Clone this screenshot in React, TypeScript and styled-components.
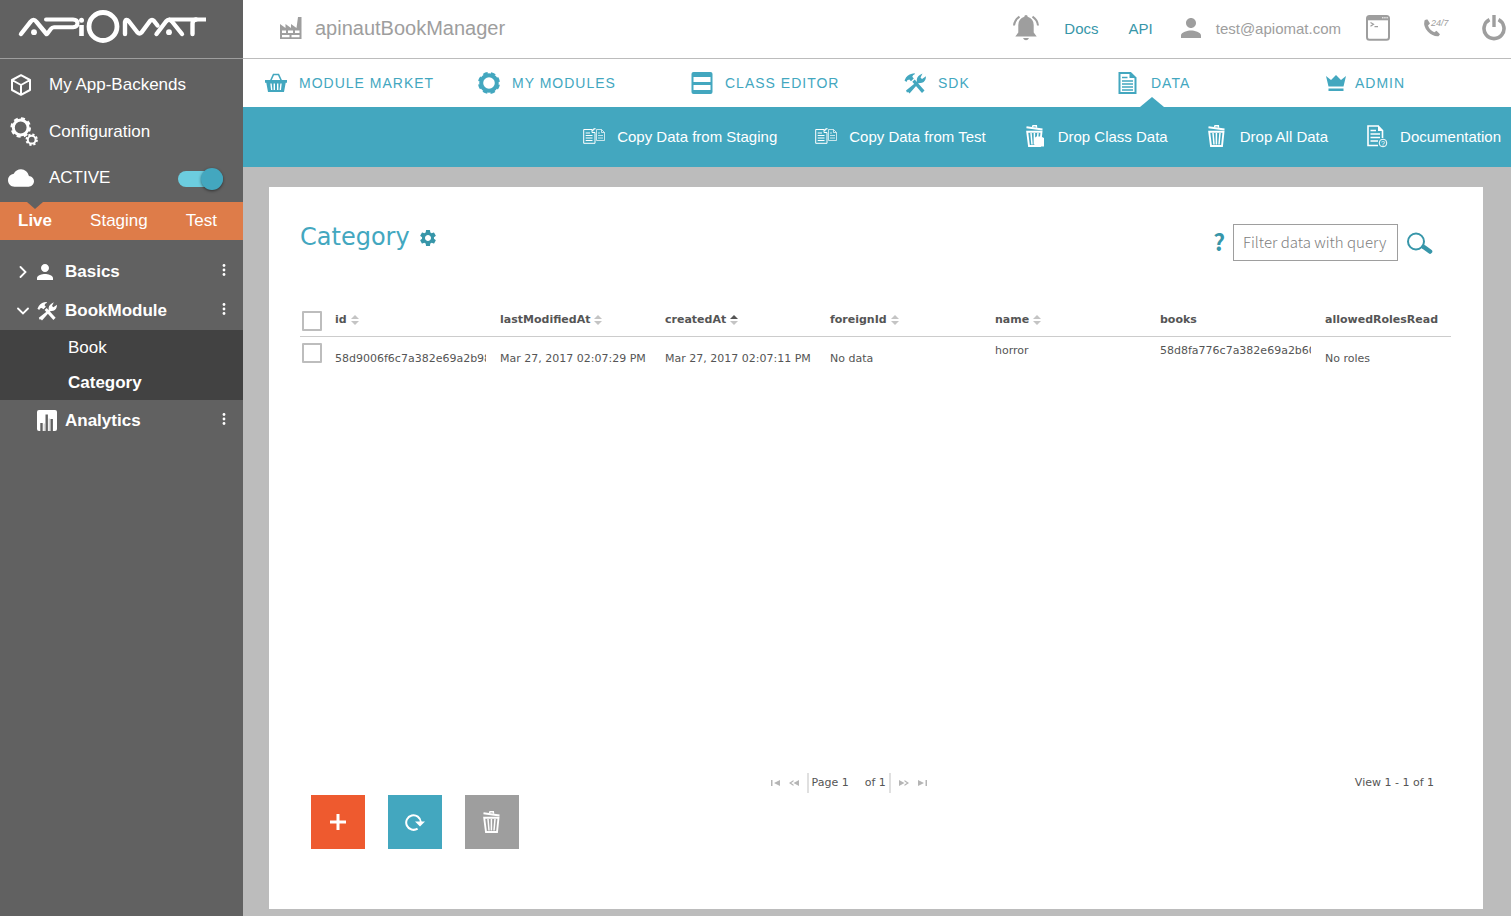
import React from "react";
import styled, { createGlobalStyle, css } from "styled-components";
import { MdCloud, MdPerson, MdSettings } from "react-icons/md";

const color = {
  teal: "#43a7bf",
  tealDark: "#3796a9",
  side: "#616161",
  sideDark: "#424242",
  orange: "#de7c49",
  red: "#ee5a2f",
  grey: "#9e9e9e",
  canvas: "#bcbcbc",
  text: "#555555",
};

const sans = `"Liberation Sans", Arial, sans-serif`;
const verdana = `"DejaVu Sans", Verdana, sans-serif`;
const source = `"Noto Sans CJK SC", "Noto Sans", sans-serif`;

const GlobalStyle = createGlobalStyle`
  *, *::before, *::after { box-sizing: border-box; }
  body { margin: 0; font-family: ${sans}; background: ${color.canvas}; }
  button { border: 0; padding: 0; background: none; font: inherit; color: inherit; cursor: pointer; }
  a { color: inherit; text-decoration: none; }
  ul { list-style: none; margin: 0; padding: 0; }
  svg { display: block; flex: none; }
`;

/* ---------- icons ---------- */

const Logo = () => (
  <svg width="190" height="34" viewBox="17 9 190 34" fill="none" stroke="#fff" strokeWidth="4.400" strokeLinecap="round" strokeLinejoin="round" role="img" aria-label="Apiomat">
    <path d="M21 34 30.500 21.800Q33.500 18 36.500 21.800L46.500 34" />
    <path d="M46 19.500H73Q77.500 19.700 77.500 23.300T73 27.300H54Q52 27.300 50.800 29L47.500 33.500" strokeWidth="4" />
    <path d="M81.500 25V36" strokeLinecap="butt" strokeWidth="4.600" />
    <circle cx="81.500" cy="20.200" r="2.500" fill="#fff" stroke="none" />
    <circle cx="103" cy="26.500" r="14" strokeWidth="4.800" />
    <path d="M125 34V22Q126 18 129 21.500L137.500 32.500Q139.500 34.500 141.500 32.500L150 21Q152 18.800 154 21L157.500 25.500" />
    <path d="M156.500 34 166 21.500Q169 18 172 21.500L182 34" />
    <path d="M169 19.500H206" strokeWidth="4" strokeLinecap="butt" />
    <path d="M192.500 34V23.500Q192.500 20 196 19.500" />
    <circle cx="34" cy="32.200" r="2.900" fill="#fff" stroke="none" />
    <circle cx="169" cy="32.200" r="2.900" fill="#fff" stroke="none" />
  </svg>
);

const CubeIcon = () => (
  <svg width="22" height="22" viewBox="0 0 22 22" fill="none" stroke="currentColor" strokeWidth="2" strokeLinejoin="round">
    <path d="M11 1.200 20 6V16L11 20.800 2 16V6ZM2 6l9 5 9-5M11 11v9.800" />
  </svg>
);

const GearsIcon = () => (
  <svg width="28" height="29" viewBox="0 0 28 29" fill="none" stroke="currentColor">
    <circle cx="10.700" cy="10.500" r="7.400" strokeWidth="3" />
    <circle cx="10.700" cy="10.500" r="9.200" strokeWidth="2.200" strokeDasharray="4 3.225" />
    <circle cx="21.700" cy="22.700" r="3.900" strokeWidth="2" />
    <circle cx="21.700" cy="22.700" r="5.200" strokeWidth="2" strokeDasharray="2.200 1.884" />
  </svg>
);

const GearRingIcon = () => (
  <svg width="22" height="22" viewBox="0 0 22 22" fill="none" stroke="currentColor">
    <circle cx="11" cy="11" r="7.800" strokeWidth="4" />
    <circle cx="11" cy="11" r="10" strokeWidth="2" strokeDasharray="4.600 3.254" strokeDashoffset="-1.600" />
  </svg>
);

const ToolsIcon = ({ size = 22 }: { size?: number }) => (
  <svg width={size} height={size} viewBox="0 0 22 22" fill="currentColor">
    <path d="M.5 8.500 2 5.500Q5 1.500 10.500 1.200L11 2Q8.500 3 8.300 4.800L9.800 6.400 7 9.200 5.300 7.600 3.300 8.200 2.500 10Z" />
    <path d="M8.300 9.800 10.700 7.600 20.500 18.500 18 21Z" />
    <path d="M2 18.500 12.800 9.800Q12.300 5 16.200 2.800L18.500 1.500 16.500 5.500 18 7 22 4.200Q21.800 9.500 18 10.700L14.500 11.200 5.500 21.500 4.200 20 3 20.500Z" />
  </svg>
);

const ChartIcon = () => (
  <svg width="20" height="21" viewBox="0 0 20 21">
    <rect width="20" height="21" rx="2" fill="#fff" />
    <path d="M4.500 21V13M9.700 21V4.500M14.700 21V9" stroke="#616161" strokeWidth="2.400" />
    <path d="M7.200 21V13.500M12.200 21V8.500" stroke="#c8c8c8" strokeWidth="1" />
  </svg>
);

const ChevronIcon = ({ open }: { open?: boolean }) => (
  <svg width="12" height="12" viewBox="0 0 12 12" fill="none" stroke="#fff" strokeWidth="1.800" strokeLinecap="round">
    <path d={open ? "M1 3.500 6 8.500 11 3.500" : "M3.500 1 8.500 6 3.500 11"} />
  </svg>
);

const DotsIcon = () => (
  <svg width="4" height="12" viewBox="0 0 4 12" fill="#fff">
    <circle cx="2" cy="1.500" r="1.400" />
    <circle cx="2" cy="6" r="1.400" />
    <circle cx="2" cy="10.500" r="1.400" />
  </svg>
);

const FactoryIcon = () => (
  <svg width="22" height="22" viewBox="0 0 22 22" fill="currentColor" fillRule="evenodd">
    <path d="M0 7 5.500 11V7L11 11V7L16.500 11 18 0H21.500V22H0ZM2 13.500V16H6V13.500ZM8 13.500V16H13V13.500ZM15 13.500V16H19.500V13.500ZM2 18V20.300H9.500V18ZM11.500 18V20.300H19.500V18Z" />
  </svg>
);

const BellIcon = () => (
  <svg width="26" height="26" viewBox="0 0 26 26" fill="currentColor">
    <path d="M11.300 1.800Q11.300 0 13 0T14.700 1.800Q20.500 3.500 20.700 10V17.500L23.700 21.500H2.300L5.300 17.500V10Q5.500 3.500 11.300 1.800Z" />
    <path d="M10 23H16Q15 25.300 13 25.300T10 23Z" />
    <path d="M1 10.500Q1.500 5 6.500 1.700M25 10.500Q24.500 5 19.500 1.700" fill="none" stroke="currentColor" strokeWidth="2" />
  </svg>
);

const ConsoleIcon = () => (
  <svg width="24" height="26" viewBox="0 0 24 26" fill="none" stroke="currentColor">
    <rect x="1" y="1" width="22" height="23.800" rx="2.500" strokeWidth="2" />
    <path d="M1 3.300H23" strokeWidth="4" />
    <path d="M16 2.800H22" stroke="#fff" strokeDasharray="1.500 .7" />
    <path d="M4.500 7.500 7.500 9.300 4.500 11.200M8.500 11.700H12" strokeWidth="1.200" />
  </svg>
);

const PhoneIcon = () => (
  <svg width="26" height="22" viewBox="0 0 26 22" fill="currentColor">
    <path d="M1.500 3.500Q3 2 4.500 2.500L7 6.500 5 8.500Q6.500 13 11.300 15.300L13.500 13.800 17 17.200 15.500 19.200Q10 19.800 5 14.800T1.500 3.500Z" />
    <text x="8" y="9" fontSize="9" fontStyle="italic" fontFamily="Liberation Sans">24/7</text>
  </svg>
);

const PowerIcon = () => (
  <svg width="24" height="26" viewBox="0 0 24 26" fill="none" stroke="currentColor">
    <path d="M7.500 4.700A10 10 0 1 0 16.500 4.700" strokeWidth="3.600" />
    <path d="M12 0V12" strokeWidth="3.400" />
  </svg>
);

const BasketIcon = () => (
  <svg width="22" height="20" viewBox="0 0 22 20">
    <path d="M5.500 8 8.500 1.500H13.500L16.500 8" fill="none" stroke="currentColor" strokeWidth="1.600" />
    <path d="M0 7H22V9.800H20.700L19 19H3L1.300 9.800H0Z" fill="currentColor" />
    <path d="M6 10.500 6.700 17M9.300 10.500V17M12.700 10.500V17M16 10.500 15.300 17" stroke="#fff" strokeWidth="1.400" />
  </svg>
);

const ClassIcon = () => (
  <svg width="22" height="22" viewBox="0 0 22 22">
    <rect x=".5" width="21" height="22" rx="2" fill="currentColor" />
    <path d="M2.500 5H19.500V10H2.500ZM2.500 13H19.500V18H2.500Z" fill="#fff" />
  </svg>
);

const DocumentIcon = () => (
  <svg width="22" height="22" viewBox="0 0 22 22" fill="none" stroke="currentColor">
    <path d="M2.500 1H13.500L18.500 6V21H2.500Z" strokeWidth="2" />
    <path d="M12.500 0V6H19.500Z" fill="currentColor" stroke="none" />
    <path d="M5 5.500H10.500M5 9H16M5 12H16M5 15H16M5 18H16" strokeWidth="1.400" />
  </svg>
);

const CrownIcon = () => (
  <svg width="20" height="18" viewBox="0 0 20 18" fill="currentColor">
    <path d="M0 2 5 6 10 1 15 6 20 2 17.500 12.500H2.500ZM2.500 14.500H17.500V17H2.500Z" />
  </svg>
);

const CopyIcon = () => (
  <svg width="22" height="16" viewBox="0 0 22 16" fill="none" stroke="#fff">
    <path d="M9 1.500H.7V15.300H12V4.500M9 1.500V4.500H12" />
    <path d="M2.700 5H7M2.700 7.500H9.500M2.700 10H9.500M2.700 12.500H9.500" />
    <path d="M9.500 3Q10 .7 12.500 .7" strokeWidth="1.200" />
    <path d="M13.500 1.500H18.500L21.500 4.500V12.500H13.500ZM18.500 1.500V4.500H21.500M15 5H17M15 7.500H20M15 10H20" opacity=".7" />
  </svg>
);

const TrashIcon = ({ filled }: { filled?: boolean }) => (
  <svg width="22" height="22" viewBox="0 0 22 22" fill="none" stroke="#fff">
    <path d="M2.500 2.300 18.500 4.500" strokeWidth="2" />
    <path d="M8.500 2 9 .8H12.300L12.500 2.800" strokeWidth="1.500" />
    <path d="M3.200 6.800H17.500L16 21H5Z" strokeWidth="1.900" />
    <path d="M7 8 8 19.500M10.400 8V19.500M14 8 13 19.500" strokeWidth="1.500" />
    {filled && <path d="M10.500 13 12.500 11.500H17L20 13V21.500H10.500Z" fill="#fff" stroke="none" />}
  </svg>
);

const HelpDocIcon = () => (
  <svg width="22" height="23" viewBox="0 0 22 23" fill="none" stroke="#fff">
    <path d="M12 20.500H2V1H12L16.500 5.500V13" strokeWidth="1.600" />
    <path d="M12 0V6H17Z" fill="#fff" stroke="none" />
    <path d="M4.500 5.500H10M4.500 9H14M4.500 12.500H14M4.500 16H12" strokeWidth="1.300" />
    <circle cx="17" cy="18" r="3.800" />
    <text x="17" y="20.500" fontSize="7" textAnchor="middle" fill="#fff" stroke="none" fontFamily="Liberation Sans">?</text>
  </svg>
);

const SearchIcon = () => (
  <svg width="26" height="22" viewBox="0 0 26 22" fill="none" stroke="currentColor">
    <circle cx="9" cy="9.500" r="8" strokeWidth="2" />
    <path d="M14.500 14 17 16" strokeWidth="3" />
    <path d="M17.500 15.500 23 19.500" strokeWidth="4.600" strokeLinecap="round" />
  </svg>
);

const ReloadIcon = () => (
  <svg width="20" height="18" viewBox="0 0 20 18">
    <path d="M12.600 15.600A7.300 7.300 0 1 1 15.800 9" fill="none" stroke="#fff" strokeWidth="2" />
    <path d="M10 8.500H20L15 13.500Z" fill="#fff" />
  </svg>
);

const PlusIcon = () => (
  <svg width="18" height="18" viewBox="0 0 18 18" stroke="#fff" strokeWidth="3">
    <path d="M9 1V17M1 9H17" />
  </svg>
);

const SortIcon = ({ active }: { active?: boolean }) => (
  <svg width="8" height="10" viewBox="0 0 8 10">
    <path d="M0 4 4 0 8 4Z" fill={active ? "#555" : "#c4c4c4"} />
    <path d="M0 6 4 10 8 6Z" fill="#c4c4c4" />
  </svg>
);

const PagerIcon = ({ kind }: { kind: "first" | "prev" | "next" | "last" }) => {
  const flip = kind === "next" || kind === "last";
  const edge = kind === "first" || kind === "last";
  return (
    <svg width="10" height="6" viewBox="0 0 10 6" fill="#b5b5b5" transform={flip ? "rotate(180)" : undefined}>
      {edge ? <path d="M0 0H1.500V6H0ZM3 3 9 0V6Z" /> : <path d="M4.500 3 10 0V6ZM0 3 4.500 0V1.500L2.200 3 4.500 4.500V6Z" />}
    </svg>
  );
};

/* ---------- shell ---------- */

const Shell = styled.div`
  display: flex;
  min-height: 100vh;
`;

const Sidebar = styled.aside`
  flex: 0 0 243px;
  background: ${color.side};
  color: #fff;
  font-size: 17px;
`;

const Brand = styled.a`
  display: flex;
  align-items: center;
  height: 59px;
  padding: 0 17px 6px;
  border-bottom: 1px solid ${color.grey};
`;

const SideMenu = styled.div`
  padding-top: 2px;
`;

const sideRow = css`
  display: flex;
  align-items: center;
  height: 47px;
`;

const SideLink = styled.a`
  ${sideRow}
`;

const StatusRow = styled.label`
  ${sideRow}
  padding: 0 20px 2px 0;
`;

const SideIcon = styled.span<{ $inset: number }>`
  width: 49px;
  padding-left: ${(p) => p.$inset}px;
`;

const Toggle = styled.input`
  appearance: none;
  display: flex;
  align-items: center;
  justify-content: flex-end;
  width: 45px;
  height: 16px;
  margin: 2px 0 0 auto;
  border-radius: 8px;
  background: #6ccddf;
  &::before {
    content: "";
    width: 22px;
    height: 22px;
    border-radius: 50%;
    background: ${color.teal};
    box-shadow: 0 1px 3px rgba(0, 0, 0, 0.5);
  }
`;

const StageBar = styled.div`
  position: relative;
  display: flex;
  justify-content: space-between;
  align-items: center;
  height: 38px;
  padding: 0 26px 0 18px;
  background: ${color.orange};
  &::before {
    content: "";
    position: absolute;
    top: 0;
    left: 27px;
    border: 8px solid transparent;
    border-bottom: 0;
    border-top: 7px solid ${color.side};
  }
`;

const Stage = styled.button<{ $active?: boolean }>`
  font-weight: ${(p) => (p.$active ? 700 : 400)};
`;

const Tree = styled.ul`
  padding-top: 12px;
`;

const TreeRow = styled.div`
  display: flex;
  align-items: center;
  height: 39px;
  padding: 0 17px;
  font-weight: 700;
`;

const TreeName = styled.button`
  display: flex;
  align-items: center;
  flex: 1;
  font-weight: 700;
`;

const TreeChevron = styled.span`
  width: 18px;
`;

const TreeIcon = styled.span`
  display: flex;
  width: 30px;
  padding-left: 2px;
`;

const MenuButton = styled.button`
  padding-bottom: 4px;
`;

const SubTree = styled.ul`
  margin-bottom: 1px;
  background: ${color.sideDark};
`;

const SubLink = styled.a<{ $active?: boolean }>`
  display: block;
  padding-left: 68px;
  line-height: 35px;
  font-weight: ${(p) => (p.$active ? 700 : 400)};
`;

const Main = styled.main`
  flex: 1;
  min-width: 0;
  display: flex;
  flex-direction: column;
`;

const Header = styled.header`
  display: flex;
  align-items: center;
  height: 59px;
  padding: 0 5px 2px 37px;
  border-bottom: 1px solid ${color.canvas};
  background: #fff;
  color: ${color.grey};
  font-size: 15px;
`;

const AppName = styled.div`
  display: flex;
  align-items: center;
  gap: 13px;
  margin-right: auto;
  font-size: 20px;
`;

const HeaderLinks = styled.div`
  display: flex;
  gap: 30px;
  margin: 0 23px 0 25px;
  color: ${color.tealDark};
`;

const UserLink = styled.a`
  display: flex;
  align-items: center;
  gap: 10px;
`;

const HeaderTools = styled.div`
  display: flex;
  align-items: center;
  gap: 33px;
  margin-left: 25px;
`;

const Tabs = styled.nav`
  display: grid;
  grid-template-columns: 213fr 213fr 213fr 213fr 209fr 185fr;
  height: 48px;
  padding-left: 22px;
  background: #fff;
  color: ${color.teal};
  font-size: 14px;
  letter-spacing: 1px;
`;

const Tab = styled.a<{ $active?: boolean; $gap?: number }>`
  position: relative;
  display: flex;
  align-items: center;
  gap: ${(p) => p.$gap ?? 12}px;
  white-space: nowrap;
  ${(p) =>
    p.$active &&
    css`
      &::after {
        content: "";
        position: absolute;
        left: 23px;
        bottom: 0;
        border: 12px solid transparent;
        border-top: 0;
        border-bottom: 10px solid ${color.teal};
      }
    `}
`;

const ActionBar = styled.div`
  display: flex;
  justify-content: flex-end;
  gap: 38px;
  height: 60px;
  padding: 0 10px 2px 0;
  background: ${color.teal};
  color: #fff;
  font-size: 15px;
`;

const Action = styled.button`
  display: flex;
  align-items: center;
  gap: 12px;
  white-space: nowrap;
`;

const Canvas = styled.div`
  flex: 1;
  display: flex;
  padding: 20px 28px 7px 26px;
  background: ${color.canvas};
`;

const Card = styled.section`
  flex: 1;
  min-width: 0;
  display: flex;
  flex-direction: column;
  padding: 37px 32px 60px 31px;
  background: #fff;
  color: ${color.text};
  font-family: ${verdana};
  font-size: 11px;
`;

const CardHead = styled.div`
  display: flex;
  align-items: center;
  height: 37px;
  padding-right: 18px;
  color: ${color.tealDark};
`;

const Title = styled.h1`
  margin: 0 8px 10px 0;
  color: ${color.teal};
  font-size: 24px;
  font-weight: 400;
  line-height: 25px;
`;

const TitleButton = styled.button`
  margin: 0 auto 10px 0;
`;

const HelpButton = styled.button`
  margin: 0 8px 4px 0;
  font-family: ${source};
  font-size: 23px;
  font-weight: 700;
  line-height: 24px;
`;

const FilterInput = styled.input`
  width: 165px;
  height: 37px;
  margin-right: 9px;
  padding: 0 9px 3px;
  border: 1px solid ${color.grey};
  font-family: ${source};
  font-size: 15px;
  font-weight: 300;
  &::placeholder {
    color: #808080;
    opacity: 1;
  }
`;

const TableArea = styled.div`
  flex: 1;
  padding-top: 44px;
`;

const Table = styled.table`
  width: 100%;
  table-layout: fixed;
  border-spacing: 0;
  line-height: 18px;
`;

const Col = styled.col<{ $w?: number }>`
  width: ${(p) => (p.$w ? `${p.$w}px` : "auto")};
`;

const HeadCell = styled.th`
  height: 32px;
  padding: 5px 0 0;
  border-bottom: 1px solid #cccccc;
  vertical-align: top;
  text-align: left;
  white-space: nowrap;
  line-height: 20px;
`;

const SortLabel = styled.span`
  display: flex;
  align-items: center;
  gap: 4px;
`;

const Cell = styled.td<{ $top?: boolean }>`
  padding: ${(p) => (p.$top ? 5 : 13)}px 14px 0 0;
  vertical-align: top;
`;

const Clip = styled.div`
  overflow: hidden;
  white-space: nowrap;
`;

const Check = styled.input`
  appearance: none;
  display: block;
  width: 20px;
  height: 20px;
  margin: 1px 0 0 2px;
  border: 2px solid #bdbdbd;
  border-radius: 1px;
  background: #fff;
  &:checked {
    background: ${color.teal};
  }
`;

const PagerRow = styled.div`
  display: flex;
  align-items: center;
  height: 20px;
  margin-bottom: 2px;
  padding-right: 17px;
  line-height: 20px;
`;

const Pager = styled.div`
  display: flex;
  align-items: center;
  gap: 8px;
  margin: 0 auto 0 41.5%;
`;

const PageInfo = styled.span`
  display: flex;
  gap: 16px;
  padding: 0 3px;
  border: solid #e0e0e0;
  border-width: 0 2px;
`;

const Actions = styled.div`
  display: flex;
  gap: 23px;
  padding-left: 11px;
`;

const SquareButton = styled.button<{ $color: string }>`
  display: grid;
  place-items: center;
  width: 54px;
  height: 54px;
  background: ${(p) => p.$color};
`;

const columns = [
  { name: "id", sort: true },
  { name: "lastModifiedAt", sort: true },
  { name: "createdAt", sort: true, active: true },
  { name: "foreignId", sort: true },
  { name: "name", sort: true },
  { name: "books" },
  { name: "allowedRolesRead" },
];

const cells = [
  { value: "58d9006f6c7a382e69a2b98" },
  { value: "Mar 27, 2017 02:07:29 PM" },
  { value: "Mar 27, 2017 02:07:11 PM" },
  { value: "No data" },
  { value: "horror", top: true },
  { value: "58d8fa776c7a382e69a2b60", top: true },
  { value: "No roles" },
];

export default function App() {
  return (
    <>
      <GlobalStyle />
      <Shell>
        <Sidebar>
          <Brand href="#"><Logo /></Brand>
          <SideMenu>
            <SideLink href="#backends"><SideIcon $inset={10}><CubeIcon /></SideIcon>My App-Backends</SideLink>
            <SideLink href="#configuration"><SideIcon $inset={10}><GearsIcon /></SideIcon>Configuration</SideLink>
            <StatusRow>
              <SideIcon $inset={8}><MdCloud size={26} /></SideIcon>
              ACTIVE
              <Toggle type="checkbox" defaultChecked />
            </StatusRow>
          </SideMenu>
          <StageBar>
            <Stage $active>Live</Stage>
            <Stage>Staging</Stage>
            <Stage>Test</Stage>
          </StageBar>
          <Tree>
            <li>
              <TreeRow>
                <TreeName><TreeChevron><ChevronIcon /></TreeChevron><TreeIcon><MdPerson size={16} viewBox="4 4 16 16" /></TreeIcon>Basics</TreeName>
                <MenuButton aria-label="Basics options"><DotsIcon /></MenuButton>
              </TreeRow>
            </li>
            <li>
              <TreeRow>
                <TreeName><TreeChevron><ChevronIcon open /></TreeChevron><TreeIcon><ToolsIcon size={20} /></TreeIcon>BookModule</TreeName>
                <MenuButton aria-label="BookModule options"><DotsIcon /></MenuButton>
              </TreeRow>
              <SubTree>
                <li><SubLink href="#book">Book</SubLink></li>
                <li><SubLink href="#category" $active>Category</SubLink></li>
              </SubTree>
            </li>
            <li>
              <TreeRow>
                <TreeName><TreeChevron /><TreeIcon><ChartIcon /></TreeIcon>Analytics</TreeName>
                <MenuButton aria-label="Analytics options"><DotsIcon /></MenuButton>
              </TreeRow>
            </li>
          </Tree>
        </Sidebar>

        <Main>
          <Header>
            <AppName><FactoryIcon />apinautBookManager</AppName>
            <button aria-label="Notifications"><BellIcon /></button>
            <HeaderLinks>
              <a href="#docs">Docs</a>
              <a href="#api">API</a>
            </HeaderLinks>
            <UserLink href="#account"><MdPerson size={30} />test@apiomat.com</UserLink>
            <HeaderTools>
              <button aria-label="Console"><ConsoleIcon /></button>
              <button aria-label="Support"><PhoneIcon /></button>
              <button aria-label="Log out"><PowerIcon /></button>
            </HeaderTools>
          </Header>

          <Tabs>
            <Tab href="#market"><BasketIcon />MODULE MARKET</Tab>
            <Tab href="#modules"><GearRingIcon />MY MODULES</Tab>
            <Tab href="#classes"><ClassIcon />CLASS EDITOR</Tab>
            <Tab href="#sdk"><ToolsIcon />SDK</Tab>
            <Tab href="#data" $active><DocumentIcon />DATA</Tab>
            <Tab href="#admin" $gap={9}><CrownIcon />ADMIN</Tab>
          </Tabs>

          <ActionBar>
            <Action><CopyIcon />Copy Data from Staging</Action>
            <Action><CopyIcon />Copy Data from Test</Action>
            <Action><TrashIcon filled />Drop Class Data</Action>
            <Action><TrashIcon />Drop All Data</Action>
            <Action><HelpDocIcon />Documentation</Action>
          </ActionBar>

          <Canvas>
            <Card>
              <CardHead>
                <Title>Category</Title>
                <TitleButton aria-label="Class settings"><MdSettings size={20} /></TitleButton>
                <HelpButton>?</HelpButton>
                <FilterInput type="text" aria-label="Filter data with query" placeholder="Filter data with query" />
                <button aria-label="Search"><SearchIcon /></button>
              </CardHead>

              <TableArea>
                <Table>
                  <colgroup>
                    <Col $w={35} />
                    {columns.map((c, i) => <Col key={c.name} $w={i < 6 ? 165 : undefined} />)}
                  </colgroup>
                  <thead>
                    <tr>
                      <HeadCell><Check type="checkbox" aria-label="Select all rows" /></HeadCell>
                      {columns.map((c) => (
                        <HeadCell key={c.name}>
                          <SortLabel>{c.name}{c.sort && <SortIcon active={c.active} />}</SortLabel>
                        </HeadCell>
                      ))}
                    </tr>
                  </thead>
                  <tbody>
                    <tr>
                      <Cell $top><Check type="checkbox" aria-label="Select row" /></Cell>
                      {cells.map((c, i) => <Cell key={i} $top={c.top}><Clip>{c.value}</Clip></Cell>)}
                    </tr>
                  </tbody>
                </Table>
              </TableArea>

              <PagerRow>
                <Pager>
                  <button aria-label="First page"><PagerIcon kind="first" /></button>
                  <button aria-label="Previous page"><PagerIcon kind="prev" /></button>
                  <PageInfo><span>Page 1</span><span>of 1</span></PageInfo>
                  <button aria-label="Next page"><PagerIcon kind="next" /></button>
                  <button aria-label="Last page"><PagerIcon kind="last" /></button>
                </Pager>
                <span>View 1 - 1 of 1</span>
              </PagerRow>

              <Actions>
                <SquareButton $color={color.red} aria-label="Add"><PlusIcon /></SquareButton>
                <SquareButton $color={color.teal} aria-label="Reload"><ReloadIcon /></SquareButton>
                <SquareButton $color={color.grey} aria-label="Delete"><TrashIcon /></SquareButton>
              </Actions>
            </Card>
          </Canvas>
        </Main>
      </Shell>
    </>
  );
}
